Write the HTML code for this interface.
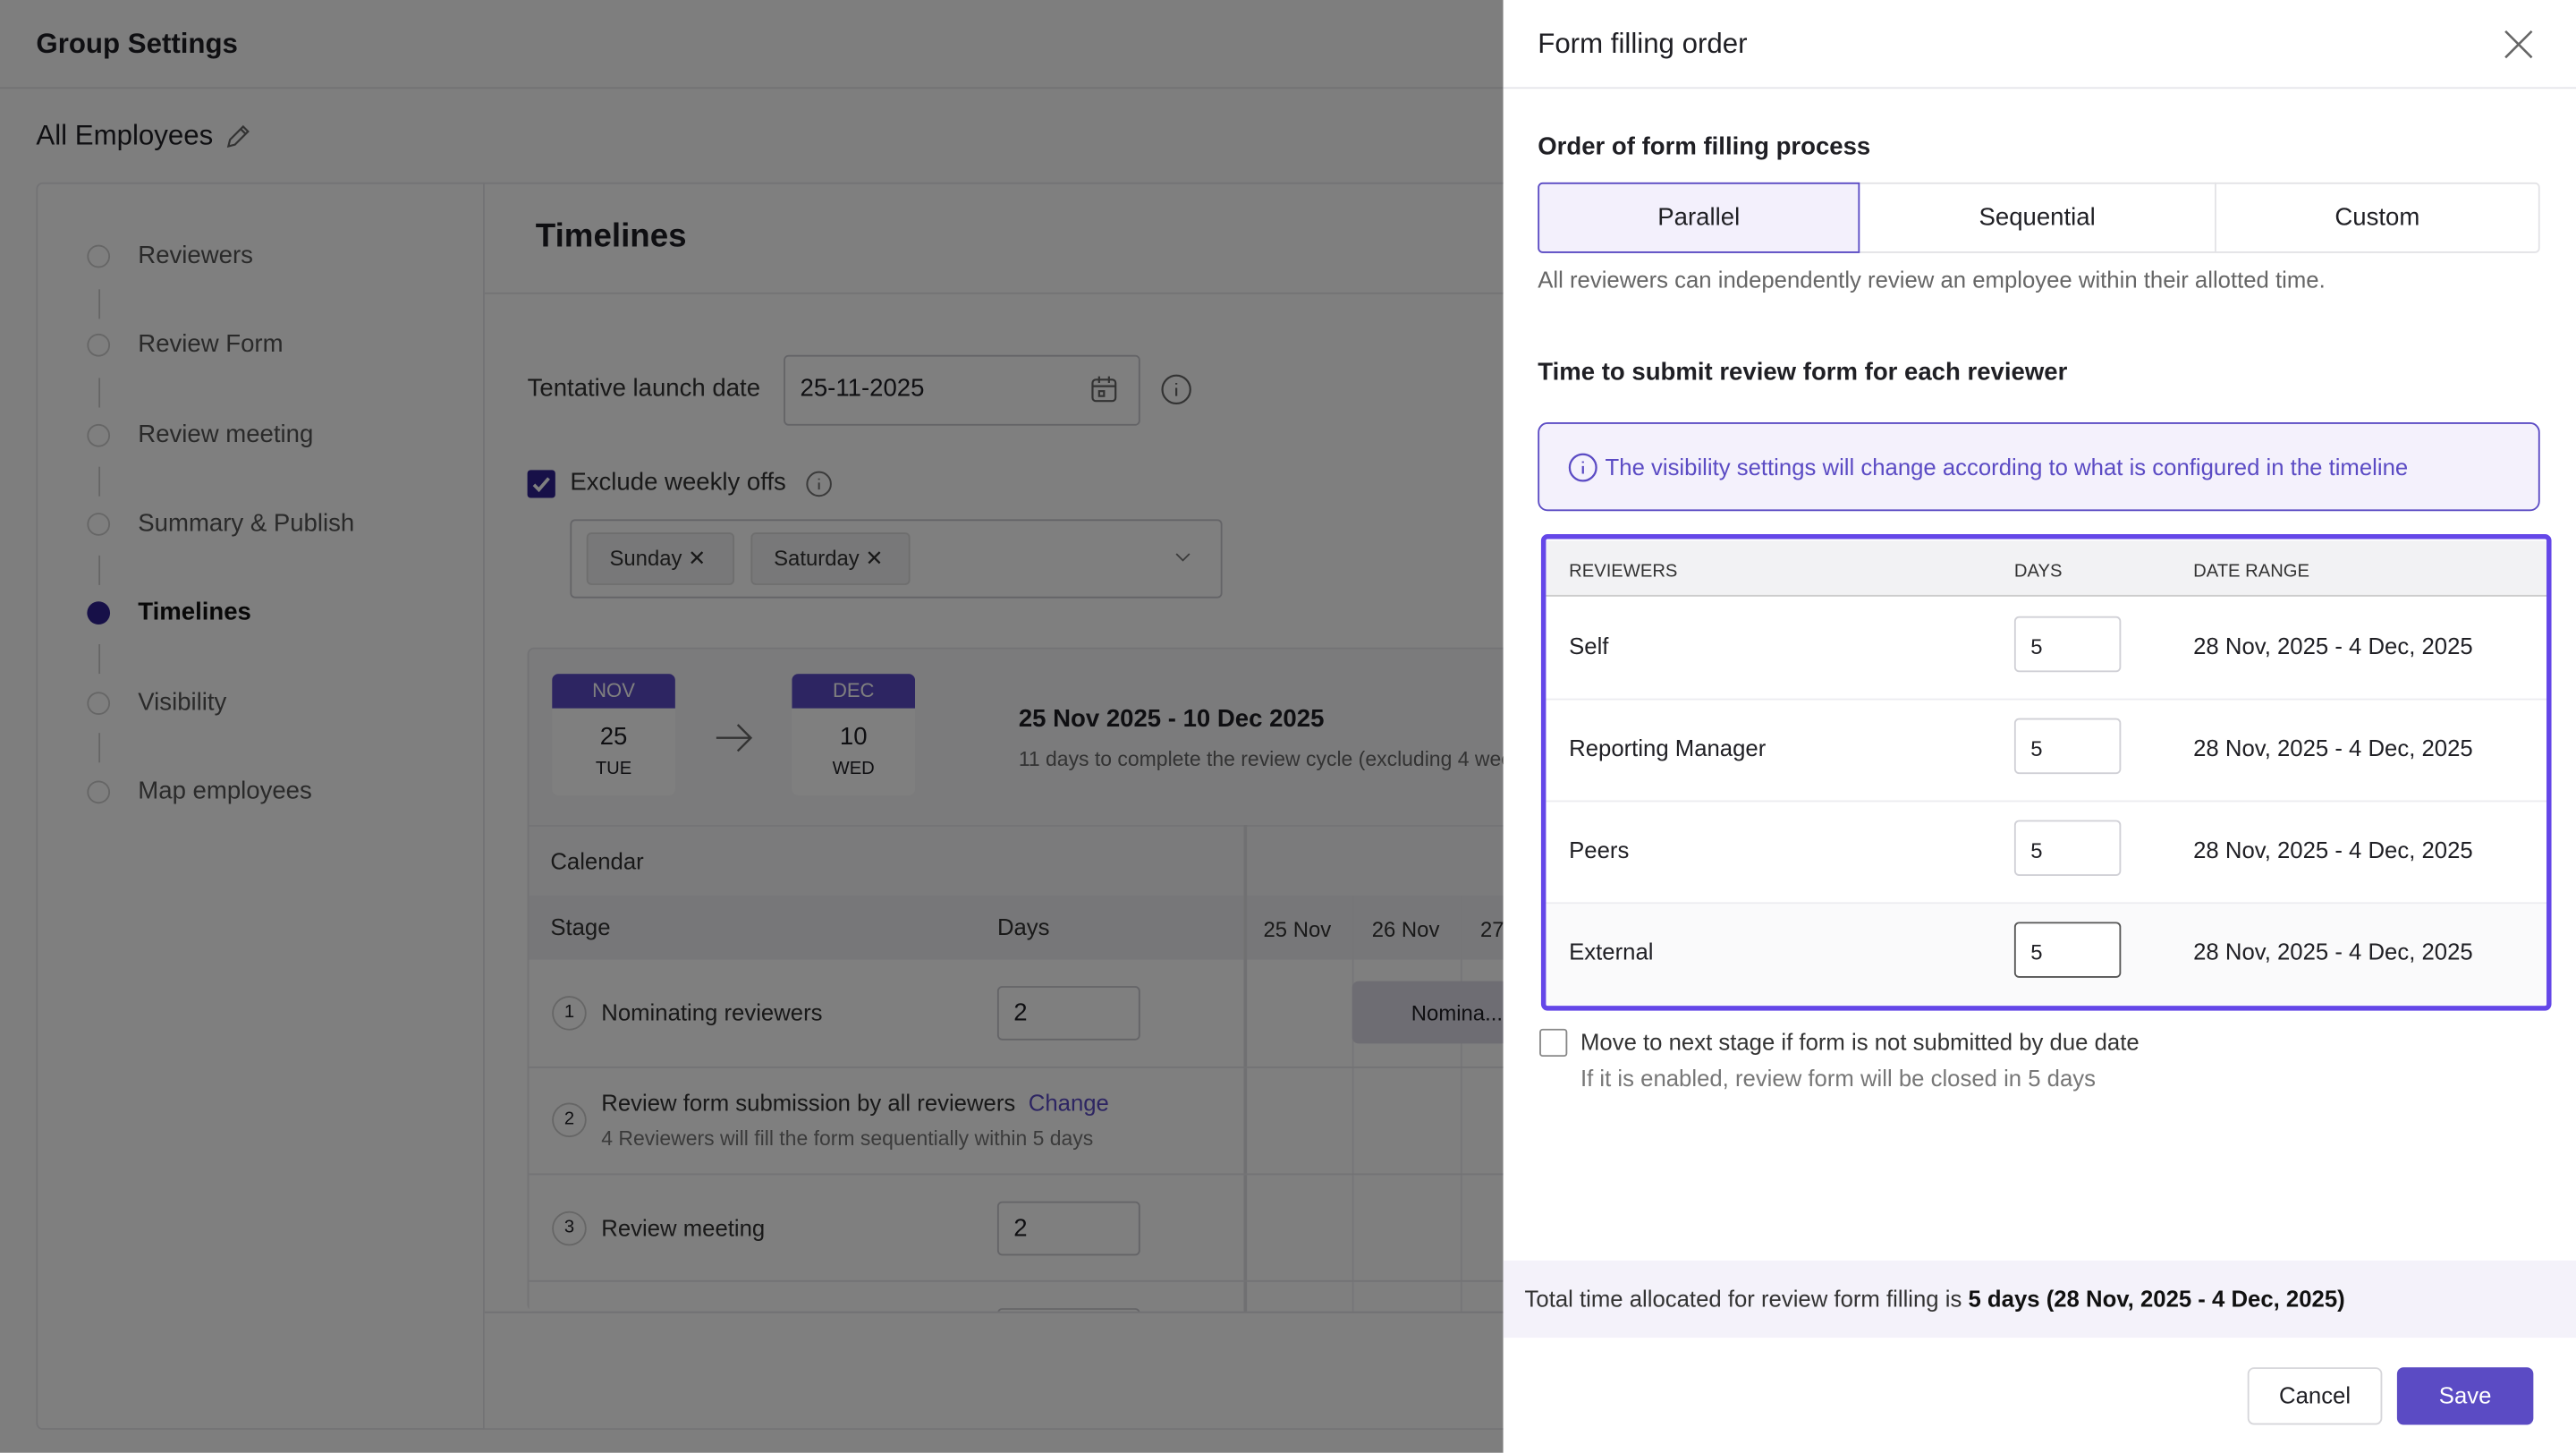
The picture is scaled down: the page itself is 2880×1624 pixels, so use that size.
<!DOCTYPE html>
<html><head><meta charset="utf-8"><style>
*{box-sizing:border-box;margin:0;padding:0}
html,body{width:2880px;height:1624px;overflow:hidden;background:#fff}
#w{position:absolute;left:0;top:0;width:1568px;height:884px;transform:scale(1.8368);transform-origin:0 0;font-family:"Liberation Sans",sans-serif;color:#1f1f24}
.a{position:absolute}
.t{position:absolute;white-space:nowrap}
.inp{position:absolute;border:1px solid #c9c9cf;border-radius:3px;background:#fff}
</style></head><body><div id="w">
<!-- left page -->
<div class="a" style="left:0;top:0;width:915px;height:884px;background:#fdfdfd"></div>
<div class="t" style="left:22px;top:17px;font-size:17px;font-weight:bold">Group Settings</div>
<div class="a" style="left:0;top:53px;width:915px;height:1px;background:#e2e2e6"></div>
<div class="t" style="left:22px;top:73px;font-size:17px">All Employees</div>
<svg class="a" style="left:137px;top:75px" width="16" height="16" viewBox="0 0 16 16" fill="none" stroke="#666" stroke-width="1.2"><path d="M2 14l1-4 8-8 3 3-8 8z M9.5 3.5l3 3"/></svg>
<div class="a" style="left:22px;top:111px;width:900px;height:759px;border:1px solid #e6e6ea;border-radius:4px;background:#fff"></div>
<div class="a" style="left:294px;top:111px;width:1px;height:759px;background:#e6e6ea"></div>
<div class="t" style="left:326px;top:133px;font-size:20px;font-weight:bold">Timelines</div>
<div class="a" style="left:295px;top:178px;width:620px;height:1px;background:#e6e6ea"></div>
<!-- nav -->
<div class="a" style="left:60px;top:176px;width:1px;height:18px;background:#ccc"></div>
<div class="a" style="left:60px;top:230px;width:1px;height:18px;background:#ccc"></div>
<div class="a" style="left:60px;top:284px;width:1px;height:18px;background:#ccc"></div>
<div class="a" style="left:60px;top:338px;width:1px;height:18px;background:#ccc"></div>
<div class="a" style="left:60px;top:392px;width:1px;height:18px;background:#ccc"></div>
<div class="a" style="left:60px;top:446px;width:1px;height:18px;background:#ccc"></div>
<div class="a" style="left:53px;top:149px;width:14px;height:14px;border:1px solid #ccc;border-radius:50%"></div>
<div class="a" style="left:53px;top:203px;width:14px;height:14px;border:1px solid #ccc;border-radius:50%"></div>
<div class="a" style="left:53px;top:258px;width:14px;height:14px;border:1px solid #ccc;border-radius:50%"></div>
<div class="a" style="left:53px;top:312px;width:14px;height:14px;border:1px solid #ccc;border-radius:50%"></div>
<div class="a" style="left:53px;top:366px;width:14px;height:14px;border-radius:50%;background:#2e2090"></div>
<div class="a" style="left:53px;top:421px;width:14px;height:14px;border:1px solid #ccc;border-radius:50%"></div>
<div class="a" style="left:53px;top:475px;width:14px;height:14px;border:1px solid #ccc;border-radius:50%"></div>
<div class="t" style="left:84px;top:147px;font-size:15px;color:#555">Reviewers</div>
<div class="t" style="left:84px;top:201px;font-size:15px;color:#555">Review Form</div>
<div class="t" style="left:84px;top:256px;font-size:15px;color:#555">Review meeting</div>
<div class="t" style="left:84px;top:310px;font-size:15px;color:#555">Summary &amp; Publish</div>
<div class="t" style="left:84px;top:364px;font-size:15px;font-weight:bold;color:#111">Timelines</div>
<div class="t" style="left:84px;top:419px;font-size:15px;color:#555">Visibility</div>
<div class="t" style="left:84px;top:473px;font-size:15px;color:#555">Map employees</div>
<!-- content -->
<div class="t" style="left:321px;top:228px;font-size:15px;color:#333">Tentative launch date</div>
<div class="inp" style="left:477px;top:216px;width:217px;height:43px"></div>
<div class="t" style="left:487px;top:228px;font-size:15px">25-11-2025</div>
<svg class="a" style="left:663px;top:228px" width="18" height="18" viewBox="0 0 18 18" fill="none" stroke="#666" stroke-width="1.2"><rect x="2" y="3" width="14" height="13" rx="2"/><path d="M2 7h14M6 1v4M12 1v4"/><rect x="6" y="10" width="3" height="3"/></svg>
<svg class="a" style="left:706px;top:227px" width="20" height="20" viewBox="0 0 20 20" fill="none" stroke="#666" stroke-width="1.2"><circle cx="10" cy="10" r="8.5"/><path d="M10 9v5M10 6v1"/></svg>
<div class="a" style="left:321px;top:286px;width:17px;height:17px;background:#2e2090;border-radius:2px"></div>
<svg class="a" style="left:321px;top:286px" width="17" height="17" viewBox="0 0 17 17" fill="none" stroke="#fff" stroke-width="2"><path d="M4 9l3 3 6-7"/></svg>
<div class="t" style="left:347px;top:285px;font-size:15px;color:#333">Exclude weekly offs</div>
<svg class="a" style="left:490px;top:286px" width="17" height="17" viewBox="0 0 20 20" fill="none" stroke="#777" stroke-width="1.3"><circle cx="10" cy="10" r="8.5"/><path d="M10 9v5M10 6v1"/></svg>
<div class="inp" style="left:347px;top:316px;width:397px;height:48px"></div>
<div class="a" style="left:357px;top:324px;width:90px;height:32px;background:#f0f0f2;border:1px solid #ddd;border-radius:3px"></div>
<div class="t" style="left:371px;top:332px;font-size:13px;color:#333">Sunday ✕</div>
<div class="a" style="left:457px;top:324px;width:97px;height:32px;background:#f0f0f2;border:1px solid #ddd;border-radius:3px"></div>
<div class="t" style="left:471px;top:332px;font-size:13px;color:#333">Saturday ✕</div>
<svg class="a" style="left:714px;top:335px" width="12" height="8" viewBox="0 0 12 8" fill="none" stroke="#777"><path d="M2 2l4 4 4-4"/></svg>
<div class="a" style="left:321px;top:394px;width:600px;height:404px;background:#f6f6f8;border:1px solid #e6e6ea;border-radius:4px"></div>
<div class="a" style="left:336px;top:410px;width:75px;height:74px;background:#fff;border-radius:4px;overflow:hidden"><div style="height:21px;background:#5b4bc4;color:#fff;font-size:12px;text-align:center;line-height:21px">NOV</div><div style="text-align:center;font-size:15px;margin-top:9px">25</div><div style="text-align:center;font-size:11px;margin-top:5px">TUE</div></div>
<div class="a" style="left:482px;top:410px;width:75px;height:74px;background:#fff;border-radius:4px;overflow:hidden"><div style="height:21px;background:#5b4bc4;color:#fff;font-size:12px;text-align:center;line-height:21px">DEC</div><div style="text-align:center;font-size:15px;margin-top:9px">10</div><div style="text-align:center;font-size:11px;margin-top:5px">WED</div></div>
<svg class="a" style="left:435px;top:439px" width="24" height="20" viewBox="0 0 24 20" fill="none" stroke="#666" stroke-width="1.3"><path d="M1 10h21M14 2l8 8-8 8"/></svg>
<div class="t" style="left:620px;top:429px;font-size:15px;font-weight:bold">25 Nov 2025 - 10 Dec 2025</div>
<div class="t" style="left:620px;top:455px;font-size:12.5px;color:#666">11 days to complete the review cycle (excluding 4 weekly offs)</div>
<div class="a" style="left:322px;top:502px;width:600px;height:1px;background:#e6e6ea"></div>
<div class="t" style="left:335px;top:516px;font-size:14px;color:#333">Calendar</div>
<div class="a" style="left:322px;top:545px;width:600px;height:39px;background:#efeff2"></div>
<div class="t" style="left:335px;top:556px;font-size:14px;color:#333">Stage</div>
<div class="t" style="left:607px;top:556px;font-size:14px;color:#333">Days</div>
<div class="t" style="left:769px;top:558px;font-size:13px;color:#333">25 Nov</div>
<div class="t" style="left:835px;top:558px;font-size:13px;color:#333">26 Nov</div>
<div class="t" style="left:901px;top:558px;font-size:13px;color:#333">27</div>
<div class="a" style="left:322px;top:584px;width:600px;height:214px;background:#fff"></div>
<div class="a" style="left:757px;top:502px;width:2px;height:296px;background:#e0e0e4"></div>
<div class="a" style="left:823px;top:545px;width:1px;height:253px;background:#ececf0"></div>
<div class="a" style="left:889px;top:545px;width:1px;height:253px;background:#ececf0"></div>
<div class="a" style="left:322px;top:649px;width:600px;height:1px;background:#e6e6ea"></div>
<div class="a" style="left:322px;top:714px;width:600px;height:1px;background:#e6e6ea"></div>
<div class="a" style="left:322px;top:779px;width:600px;height:1px;background:#e6e6ea"></div>
<div class="a" style="left:336px;top:606px;width:21px;height:21px;border:1px solid #ccc;border-radius:50%;font-size:11px;text-align:center;line-height:19px">1</div>
<div class="t" style="left:366px;top:608px;font-size:14px;color:#333">Nominating reviewers</div>
<div class="inp" style="left:607px;top:600px;width:87px;height:33px"></div><div class="t" style="left:617px;top:608px;font-size:15px">2</div>
<div class="a" style="left:823px;top:597px;width:95px;height:38px;background:#dcdae6;border-radius:4px"></div>
<div class="t" style="left:859px;top:609px;font-size:13px">Nomina...</div>
<div class="a" style="left:336px;top:671px;width:21px;height:21px;border:1px solid #ccc;border-radius:50%;font-size:11px;text-align:center;line-height:19px">2</div>
<div class="t" style="left:366px;top:663px;font-size:14px;color:#333">Review form submission by all reviewers <span style="color:#5b4bc4;margin-left:4px">Change</span></div>
<div class="t" style="left:366px;top:686px;font-size:12.5px;color:#777">4 Reviewers will fill the form sequentially within 5 days</div>
<div class="a" style="left:336px;top:737px;width:21px;height:21px;border:1px solid #ccc;border-radius:50%;font-size:11px;text-align:center;line-height:19px">3</div>
<div class="t" style="left:366px;top:739px;font-size:14px;color:#333">Review meeting</div>
<div class="inp" style="left:607px;top:731px;width:87px;height:33px"></div><div class="t" style="left:617px;top:739px;font-size:15px">2</div>
<div class="inp" style="left:607px;top:796px;width:87px;height:6px;border-bottom:none"></div>
<div class="a" style="left:295px;top:798px;width:626px;height:71px;background:#fff;border-top:1px solid #e0e0e4"></div>
<!-- dim overlay -->
<div class="a" style="left:0;top:0;width:915px;height:884px;background:rgba(0,0,0,0.5)"></div>

<!-- right panel -->
<div class="a" style="left:915px;top:0;width:653px;height:884px;background:#fff"></div>
<div class="t" style="left:936px;top:17px;font-size:17px">Form filling order</div>
<svg class="a" style="left:1523px;top:17px" width="20" height="20" viewBox="0 0 20 20" stroke="#666" stroke-width="1.4"><path d="M2 2l16 16M18 2L2 18"/></svg>
<div class="a" style="left:915px;top:53px;width:653px;height:1px;background:#e6e6ea"></div>
<div class="t" style="left:936px;top:81px;font-size:15px;font-weight:bold">Order of form filling process</div>
<div class="a" style="left:936px;top:111px;width:610px;height:43px;border:1px solid #e3e3e6;border-radius:3px"></div>
<div class="a" style="left:1348px;top:111px;width:1px;height:43px;background:#e3e3e6"></div>
<div class="a" style="left:936px;top:111px;width:196px;height:43px;border:1px solid #5b4bc4;border-radius:3px 0 0 3px;background:#f3f0fc;text-align:center;line-height:41px;font-size:15px">Parallel</div>
<div class="t" style="left:1132px;top:124px;width:216px;text-align:center;font-size:15px">Sequential</div>
<div class="t" style="left:1348px;top:124px;width:198px;text-align:center;font-size:15px">Custom</div>
<div class="t" style="left:936px;top:162px;font-size:14px;color:#666">All reviewers can independently review an employee within their allotted time.</div>
<div class="t" style="left:936px;top:218px;font-size:15px;font-weight:bold">Time to submit review form for each reviewer</div>
<div class="a" style="left:936px;top:257px;width:610px;height:54px;border:1px solid #5b4bc4;border-radius:6px;background:#f4f1fc"></div>
<svg class="a" style="left:954px;top:275px" width="19" height="19" viewBox="0 0 20 20" fill="none" stroke="#5b4bc4" stroke-width="1.3"><circle cx="10" cy="10" r="8.5"/><path d="M10 9v5M10 6v1"/></svg>
<div class="t" style="left:977px;top:276px;font-size:14px;color:#5b4bc4">The visibility settings will change according to what is configured in the timeline</div>
<div class="a" style="left:938px;top:325px;width:615px;height:290px;border:3px solid #6447e8;border-radius:4px;overflow:hidden;background:#fff">
 <div class="a" style="left:0;top:1px;width:609px;height:34px;background:#f2f2f4;border-bottom:1px solid #ccc"></div>
 <div class="t" style="left:14px;top:14px;font-size:11px;color:#333">REVIEWERS</div>
 <div class="t" style="left:285px;top:14px;font-size:11px;color:#333">DAYS</div>
 <div class="t" style="left:394px;top:14px;font-size:11px;color:#333">DATE RANGE</div>
 <div class="a" style="left:0;top:97px;width:609px;height:1px;background:#ececf0"></div>
 <div class="a" style="left:0;top:159px;width:609px;height:1px;background:#ececf0"></div>
 <div class="a" style="left:0;top:221px;width:609px;height:1px;background:#ececf0"></div>
 <div class="a" style="left:0;top:222px;width:609px;height:62px;background:#fafafb"></div>
 <div class="t" style="left:14px;top:57px;font-size:14px">Self</div>
 <div class="t" style="left:14px;top:119px;font-size:14px">Reporting Manager</div>
 <div class="t" style="left:14px;top:181px;font-size:14px">Peers</div>
 <div class="t" style="left:14px;top:243px;font-size:14px">External</div>
 <div class="inp" style="left:285px;top:47px;width:65px;height:34px;border-color:#d0d0d6"></div>
 <div class="inp" style="left:285px;top:109px;width:65px;height:34px;border-color:#d0d0d6"></div>
 <div class="inp" style="left:285px;top:171px;width:65px;height:34px;border-color:#d0d0d6"></div>
 <div class="inp" style="left:285px;top:233px;width:65px;height:34px;border-color:#555"></div>
 <div class="t" style="left:295px;top:58px;font-size:13px">5</div>
 <div class="t" style="left:295px;top:120px;font-size:13px">5</div>
 <div class="t" style="left:295px;top:182px;font-size:13px">5</div>
 <div class="t" style="left:295px;top:244px;font-size:13px">5</div>
 <div class="t" style="left:394px;top:57px;font-size:14px">28 Nov, 2025 - 4 Dec, 2025</div>
 <div class="t" style="left:394px;top:119px;font-size:14px">28 Nov, 2025 - 4 Dec, 2025</div>
 <div class="t" style="left:394px;top:181px;font-size:14px">28 Nov, 2025 - 4 Dec, 2025</div>
 <div class="t" style="left:394px;top:243px;font-size:14px">28 Nov, 2025 - 4 Dec, 2025</div>
</div>
<div class="a" style="left:937px;top:626px;width:17px;height:17px;border:1px solid #888;border-radius:2px"></div>
<div class="t" style="left:962px;top:626px;font-size:14px;color:#333">Move to next stage if form is not submitted by due date</div>
<div class="t" style="left:962px;top:648px;font-size:14px;color:#777">If it is enabled, review form will be closed in 5 days</div>
<div class="a" style="left:915px;top:767px;width:653px;height:47px;background:#f4f2fa"></div>
<div class="t" style="left:928px;top:782px;font-size:14px;color:#333">Total time allocated for review form filling is <b style="color:#111">5 days (28 Nov, 2025 - 4 Dec, 2025)</b></div>
<div class="a" style="left:1368px;top:832px;width:82px;height:35px;border:1px solid #d6d6da;border-radius:4px;text-align:center;line-height:33px;font-size:14px">Cancel</div>
<div class="a" style="left:1459px;top:832px;width:83px;height:35px;background:#5b4bc4;border-radius:4px;text-align:center;line-height:35px;font-size:14px;color:#fff">Save</div>
</div></body></html>
